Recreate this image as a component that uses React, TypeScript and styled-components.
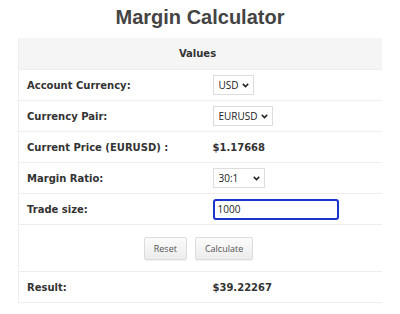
import styled, { createGlobalStyle } from "styled-components";

const GlobalStyle = createGlobalStyle`
  html, body {
    margin: 0;
    padding: 0;
    background: #ffffff;
  }
  body {
    font-family: "DejaVu Sans", Verdana, sans-serif;
    color: #333333;
  }
`;

const Page = styled.div`
  width: 400px;
  height: 314px;
  overflow: hidden;
`;

const Title = styled.h1`
  margin: 6px 0 9px 0;
  font-family: "Liberation Sans", Arial, sans-serif;
  font-size: 20px;
  line-height: 23px;
  font-weight: bold;
  color: #444444;
  text-align: center;
`;

const Table = styled.table`
  margin-left: 18px;
  width: 364px;
  border-collapse: collapse;
  table-layout: fixed;
  border-left: 1px solid #eeeeee;
`;

const Col = styled.col<{ $width?: number }>`
  width: ${(p) => (p.$width ? `${p.$width}px` : "auto")};
`;

const HeadCell = styled.th`
  height: 31px;
  padding: 0 6px 0 0;
  background: #f5f5f5;
  font-size: 10px;
  font-weight: bold;
  color: #333333;
  text-align: center;
  border-bottom: 1px solid #eeeeee;
`;

const Row = styled.tr<{ $tall?: boolean }>`
  height: ${(p) => (p.$tall ? "47px" : "31px")};
  border-bottom: 1px solid #eeeeee;
`;

const LabelCell = styled.td`
  padding: 0 0 0 8px;
  font-size: 10px;
  font-weight: bold;
  color: #333333;
  vertical-align: middle;
`;

const ValueCell = styled.td`
  padding: 0 0 0 8px;
  font-size: 10px;
  font-weight: bold;
  color: #333333;
  vertical-align: middle;
`;

const SelectBox = styled.span<{ $width: number }>`
  display: inline-flex;
  align-items: center;
  box-sizing: border-box;
  width: ${(p) => p.$width}px;
  height: 20px;
  border: 1px solid #dddddd;
  background: #ffffff;
  vertical-align: middle;
`;

const Select = styled.select`
  flex: 1;
  min-width: 0;
  height: 18px;
  padding: 0 0 0 5px;
  border: none;
  outline: none;
  background: transparent;
  appearance: none;
  -webkit-appearance: none;
  font-family: "Open Sans", sans-serif;
  font-size: 10px;
  color: #222222;
`;

const Chevron = styled.svg`
  flex: none;
  margin-right: 4px;
  pointer-events: none;
`;

const TextInput = styled.input`
  box-sizing: border-box;
  width: 126px;
  height: 21px;
  padding: 0 0 0 3px;
  border: 2px solid #1c35c9;
  border-radius: 3px;
  outline: none;
  font-family: "Open Sans", sans-serif;
  font-size: 10px;
  color: #222222;
  vertical-align: middle;
`;

const ButtonCell = styled.td`
  padding: 0 4px 0 0;
  text-align: center;
  vertical-align: middle;
`;

const ButtonGroup = styled.div`
  display: inline-flex;
  gap: 8px;
`;

const Button = styled.button`
  box-sizing: border-box;
  height: 23px;
  padding: 0 9px;
  border: 1px solid #dcdcdc;
  border-radius: 2px;
  background: linear-gradient(#fbfbfb, #ececec);
  box-shadow: 0 1px 1px rgba(0, 0, 0, 0.05);
  font-family: "Open Sans", sans-serif;
  font-size: 9px;
  color: #555555;
  cursor: pointer;
`;

const ChevronIcon = () => (
  <Chevron width="7" height="5" viewBox="0 0 7 5">
    <path d="M0.8 0.9 L3.5 3.6 L6.2 0.9" fill="none" stroke="#222" strokeWidth="1.5" />
  </Chevron>
);

const Dropdown = ({ width, value, options }: { width: number; value: string; options: string[] }) => (
  <SelectBox $width={width}>
    <Select defaultValue={value}>
      {options.map((o) => (
        <option key={o}>{o}</option>
      ))}
    </Select>
    <ChevronIcon />
  </SelectBox>
);

const App = () => (
  <Page>
    <GlobalStyle />
    <Title>Margin Calculator</Title>
    <Table>
      <colgroup>
        <Col $width={186} />
        <Col />
      </colgroup>
      <thead>
        <tr>
          <HeadCell colSpan={2}>Values</HeadCell>
        </tr>
      </thead>
      <tbody>
        <Row>
          <LabelCell>Account Currency:</LabelCell>
          <ValueCell>
            <Dropdown width={41} value="USD" options={["USD", "EUR", "GBP"]} />
          </ValueCell>
        </Row>
        <Row>
          <LabelCell>Currency Pair:</LabelCell>
          <ValueCell>
            <Dropdown width={60} value="EURUSD" options={["EURUSD", "GBPUSD", "USDJPY"]} />
          </ValueCell>
        </Row>
        <Row>
          <LabelCell>Current Price (EURUSD) :</LabelCell>
          <ValueCell>$1.17668</ValueCell>
        </Row>
        <Row>
          <LabelCell>Margin Ratio:</LabelCell>
          <ValueCell>
            <Dropdown width={52} value="30:1" options={["30:1", "20:1", "10:1"]} />
          </ValueCell>
        </Row>
        <Row>
          <LabelCell>Trade size:</LabelCell>
          <ValueCell>
            <TextInput defaultValue="1000" />
          </ValueCell>
        </Row>
        <Row $tall>
          <ButtonCell colSpan={2}>
            <ButtonGroup>
              <Button>Reset</Button>
              <Button>Calculate</Button>
            </ButtonGroup>
          </ButtonCell>
        </Row>
        <Row>
          <LabelCell>Result:</LabelCell>
          <ValueCell>$39.22267</ValueCell>
        </Row>
      </tbody>
    </Table>
  </Page>
);

export default App;
